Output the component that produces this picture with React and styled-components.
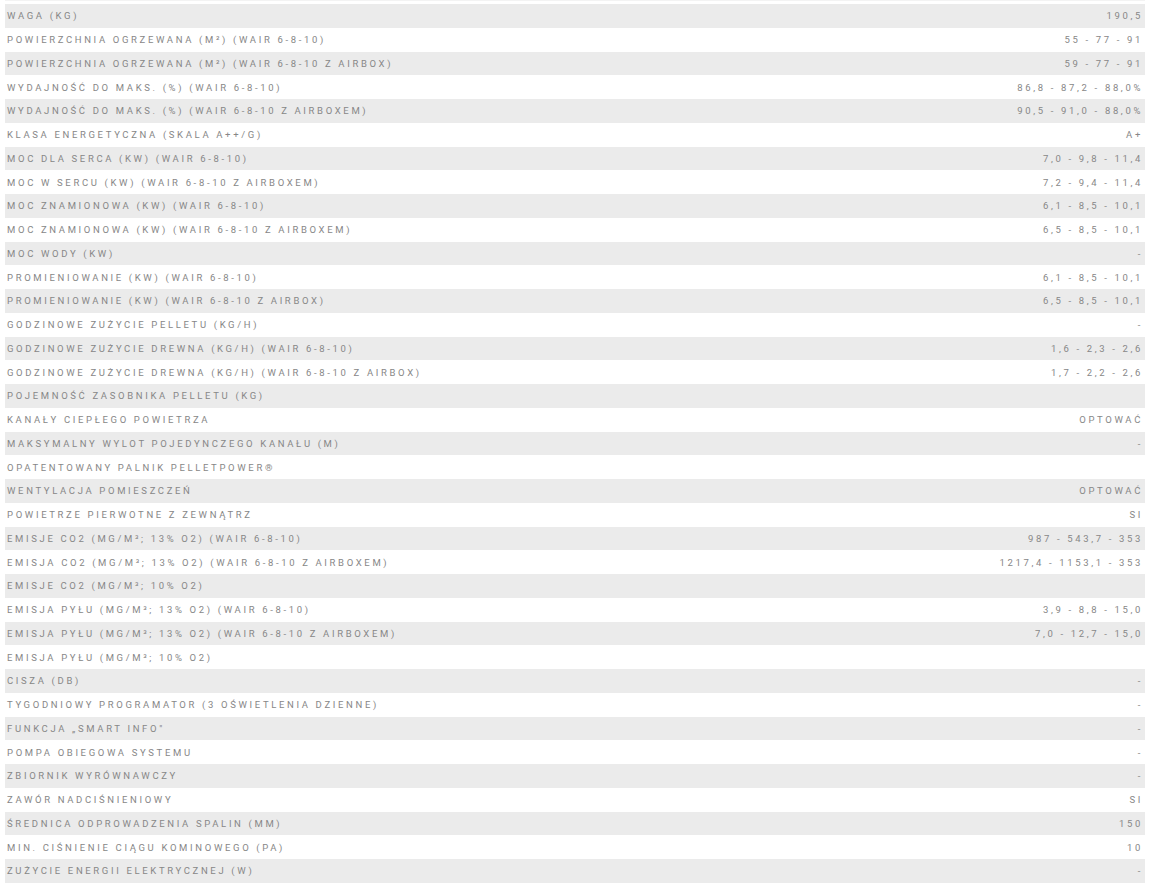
import React from 'react';
import styled, { createGlobalStyle } from 'styled-components';

const GlobalStyle = createGlobalStyle`
    html, body {
        margin: 0;
        padding: 0;
        background: #ffffff;
    }
`;

const Page = styled.div`
    padding: 0 9px 4px 5px;
`;

const TopRule = styled.div`
    height: 1px;
    margin-bottom: 3px;
    background: #f3f3f3;
`;

const Table = styled.div`
    display: flex;
    flex-direction: column;
`;

const Row = styled.div`
    display: flex;
    align-items: center;
    justify-content: space-between;
    height: 23.76px;
    padding: 0 2px 0 2px;
    background: ${(p) => (p.$shaded ? '#ebebeb' : '#ffffff')};
    font-family: 'Roboto', 'DejaVu Sans', sans-serif;
    font-size: 9.5px;
    letter-spacing: 2.65px;
    text-transform: uppercase;
    color: #878787;
    white-space: nowrap;
`;

const Label = styled.span``;

const Value = styled.span`
    text-align: right;
`;

const specs = [
    ['WAGA (KG)', '190,5'],
    ['POWIERZCHNIA OGRZEWANA (M²) (WAIR 6-8-10)', '55 - 77 - 91'],
    ['POWIERZCHNIA OGRZEWANA (M²) (WAIR 6-8-10 Z AIRBOX)', '59 - 77 - 91'],
    ['WYDAJNOŚĆ DO MAKS. (%) (WAIR 6-8-10)', '86,8 - 87,2 - 88,0%'],
    ['WYDAJNOŚĆ DO MAKS. (%) (WAIR 6-8-10 Z AIRBOXEM)', '90,5 - 91,0 - 88,0%'],
    ['KLASA ENERGETYCZNA (SKALA A++/G)', 'A+'],
    ['MOC DLA SERCA (KW) (WAIR 6-8-10)', '7,0 - 9,8 - 11,4'],
    ['MOC W SERCU (KW) (WAIR 6-8-10 Z AIRBOXEM)', '7,2 - 9,4 - 11,4'],
    ['MOC ZNAMIONOWA (KW) (WAIR 6-8-10)', '6,1 - 8,5 - 10,1'],
    ['MOC ZNAMIONOWA (KW) (WAIR 6-8-10 Z AIRBOXEM)', '6,5 - 8,5 - 10,1'],
    ['MOC WODY (KW)', '-'],
    ['PROMIENIOWANIE (KW) (WAIR 6-8-10)', '6,1 - 8,5 - 10,1'],
    ['PROMIENIOWANIE (KW) (WAIR 6-8-10 Z AIRBOX)', '6,5 - 8,5 - 10,1'],
    ['GODZINOWE ZUŻYCIE PELLETU (KG/H)', '-'],
    ['GODZINOWE ZUŻYCIE DREWNA (KG/H) (WAIR 6-8-10)', '1,6 - 2,3 - 2,6'],
    ['GODZINOWE ZUŻYCIE DREWNA (KG/H) (WAIR 6-8-10 Z AIRBOX)', '1,7 - 2,2 - 2,6'],
    ['POJEMNOŚĆ ZASOBNIKA PELLETU (KG)', ''],
    ['KANAŁY CIEPŁEGO POWIETRZA', 'OPTOWAĆ'],
    ['MAKSYMALNY WYLOT POJEDYNCZEGO KANAŁU (M)', '-'],
    ['OPATENTOWANY PALNIK PELLETPOWER®', ''],
    ['WENTYLACJA POMIESZCZEŃ', 'OPTOWAĆ'],
    ['POWIETRZE PIERWOTNE Z ZEWNĄTRZ', 'SI'],
    ['EMISJE CO2 (MG/M³; 13% O2) (WAIR 6-8-10)', '987 - 543,7 - 353'],
    ['EMISJA CO2 (MG/M³; 13% O2) (WAIR 6-8-10 Z AIRBOXEM)', '1217,4 - 1153,1 - 353'],
    ['EMISJE CO2 (MG/M³; 10% O2)', ''],
    ['EMISJA PYŁU (MG/M³; 13% O2) (WAIR 6-8-10)', '3,9 - 8,8 - 15,0'],
    ['EMISJA PYŁU (MG/M³; 13% O2) (WAIR 6-8-10 Z AIRBOXEM)', '7,0 - 12,7 - 15,0'],
    ['EMISJA PYŁU (MG/M³; 10% O2)', ''],
    ['CISZA (DB)', '-'],
    ['TYGODNIOWY PROGRAMATOR (3 OŚWIETLENIA DZIENNE)', '-'],
    ['FUNKCJA „SMART INFO"', '-'],
    ['POMPA OBIEGOWA SYSTEMU', '-'],
    ['ZBIORNIK WYRÓWNAWCZY', '-'],
    ['ZAWÓR NADCIŚNIENIOWY', 'SI'],
    ['ŚREDNICA ODPROWADZENIA SPALIN (MM)', '150'],
    ['MIN. CIŚNIENIE CIĄGU KOMINOWEGO (PA)', '10'],
    ['ZUŻYCIE ENERGII ELEKTRYCZNEJ (W)', '-'],
];

const App = () => (
    <Page>
        <GlobalStyle />
        <TopRule />
        <Table>
            {specs.map(([label, value], i) => (
                <Row key={label} $shaded={i % 2 === 0}>
                    <Label>{label}</Label>
                    <Value>{value}</Value>
                </Row>
            ))}
        </Table>
    </Page>
);

export default App;
